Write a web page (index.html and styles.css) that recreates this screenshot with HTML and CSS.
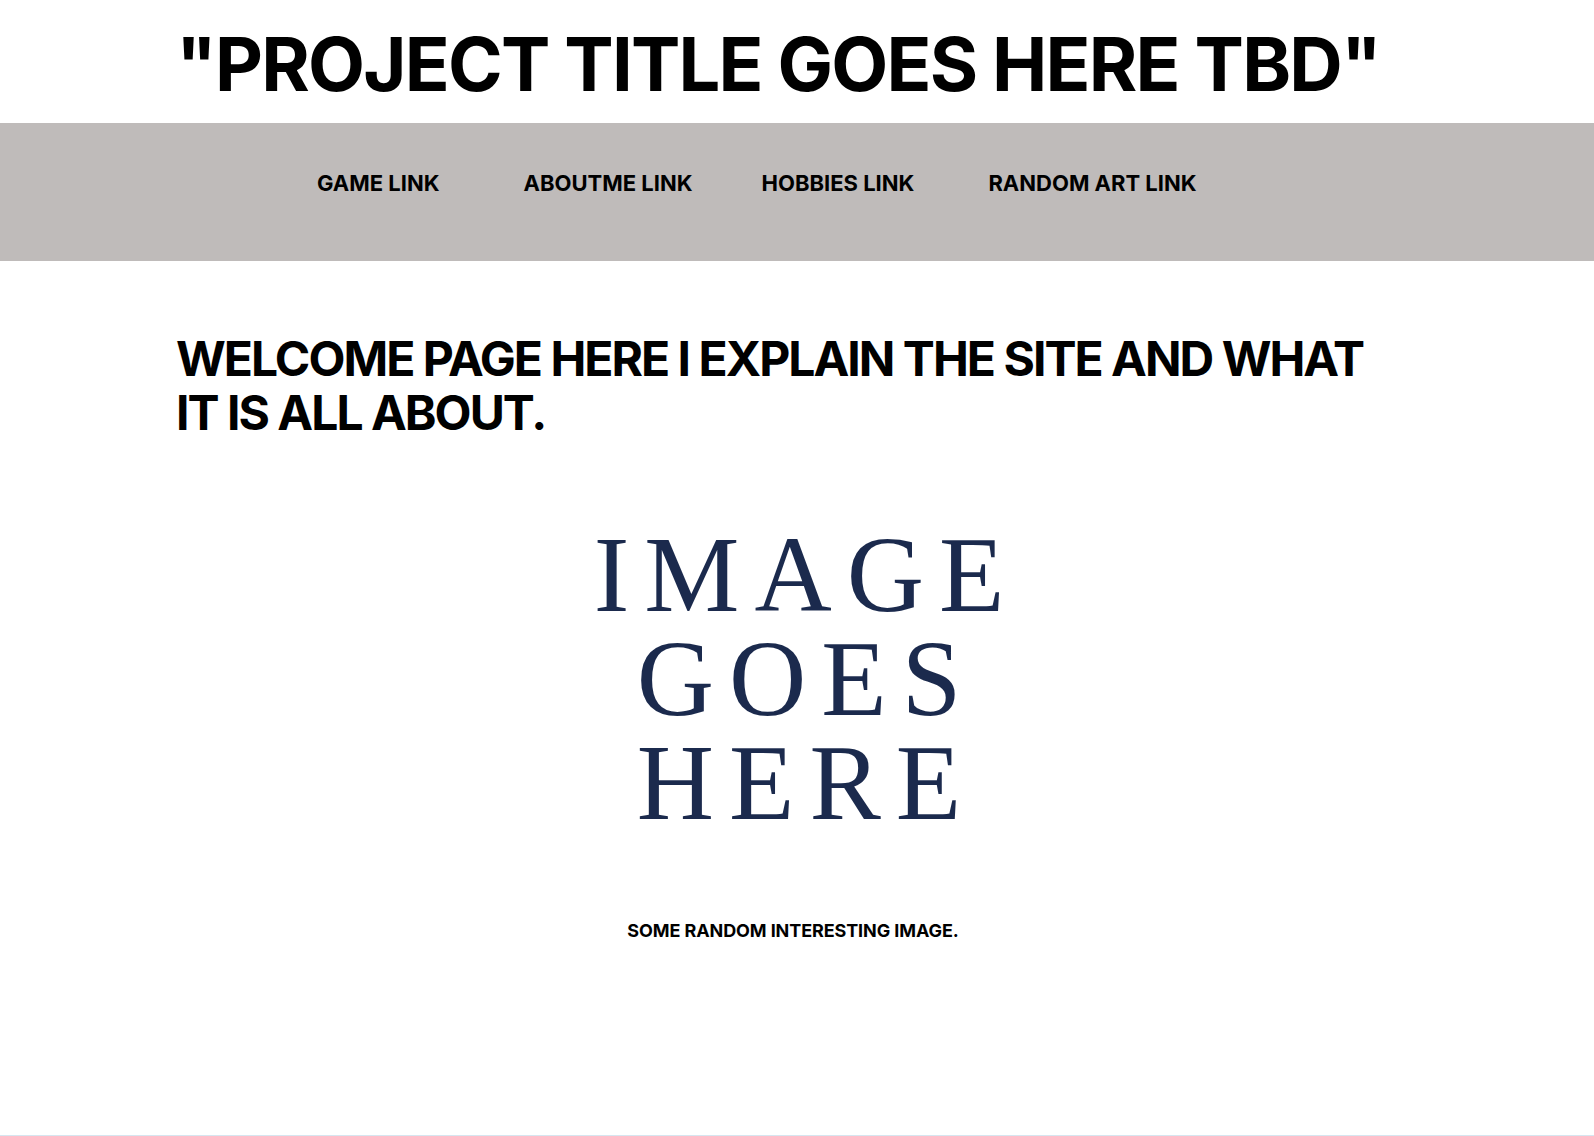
FILE: index.html
```html
<!DOCTYPE html>
<html lang="en">
<head>
<meta charset="utf-8">
<title>Project</title>
<link rel="stylesheet" href="styles.css">
</head>
<body>
<div class="page">
  <header class="site-header">
    <h1 class="site-title">"PROJECT TITLE GOES HERE TBD"</h1>
  </header>
  <nav class="site-nav">
    <a class="nav-link nav-game" href="#">GAME LINK</a>
    <a class="nav-link nav-about" href="#">ABOUTME LINK</a>
    <a class="nav-link nav-hobbies" href="#">HOBBIES LINK</a>
    <a class="nav-link nav-art" href="#">RANDOM ART LINK</a>
  </nav>
  <main class="content">
    <h2 class="welcome">WELCOME PAGE HERE I EXPLAIN THE SITE AND WHAT IT IS ALL ABOUT.</h2>
    <figure class="figure">
      <div class="placeholder" role="img" aria-label="Image goes here">
        <span class="ph-line">IMAGE</span>
        <span class="ph-line">GOES</span>
        <span class="ph-line">HERE</span>
      </div>
      <figcaption class="caption">SOME RANDOM INTERESTING IMAGE.</figcaption>
    </figure>
  </main>
  <footer class="site-footer"></footer>
</div>
</body>
</html>
```
FILE: styles.css
```css
html, body {
  margin: 0;
  padding: 0;
  background: #ffffff;
}
body {
  font-family: Inter, "Liberation Sans", Arial, sans-serif;
  color: #000000;
}
.page {
  min-height: 100vh;
  display: flex;
  flex-direction: column;
}
.site-header {
  height: 123px;
  padding-left: 176px;
  box-sizing: border-box;
}
.site-title {
  margin: 0;
  padding-top: 19px;
  font-size: 74px;
  font-weight: 700;
  line-height: normal;
  letter-spacing: -0.024em;
  white-space: nowrap;
}
.site-nav {
  height: 138px;
  background: #bfbbba;
  display: flex;
  align-items: flex-start;
  padding-left: 317px;
  padding-top: 47px;
  box-sizing: border-box;
}
.nav-link {
  color: #000000;
  text-decoration: none;
  font-size: 22px;
  font-weight: 700;
  line-height: normal;
  white-space: nowrap;
}
.nav-game { margin-right: 84px; }
.nav-about { margin-right: 69px; }
.nav-hobbies { margin-right: 74px; }
.content {
  flex: 1;
  padding-left: 176px;
  padding-right: 176px;
}
.welcome {
  margin: 71px 0 0 0;
  font-size: 48px;
  font-weight: 700;
  line-height: 54px;
  letter-spacing: -0.041em;
  max-width: 1230px;
}
.figure {
  margin: 0;
  display: flex;
  flex-direction: column;
  align-items: center;
}
.placeholder {
  margin-top: 83px;
  margin-left: 4px;
  display: flex;
  flex-direction: column;
  align-items: center;
  font-family: "Liberation Serif", "Times New Roman", serif;
  font-size: 107px;
  line-height: 104px;
  color: #1b2a4d;
  letter-spacing: 15px;
}
.ph-line {
  display: block;
  padding-left: 15px;
}
.caption {
  margin-top: 85px;
  margin-right: 8px;
  font-size: 18px;
  font-weight: 700;
  line-height: normal;
  letter-spacing: -0.1px;
}
.site-footer {
  height: 1px;
  background: #d6e6f0;
}
```
